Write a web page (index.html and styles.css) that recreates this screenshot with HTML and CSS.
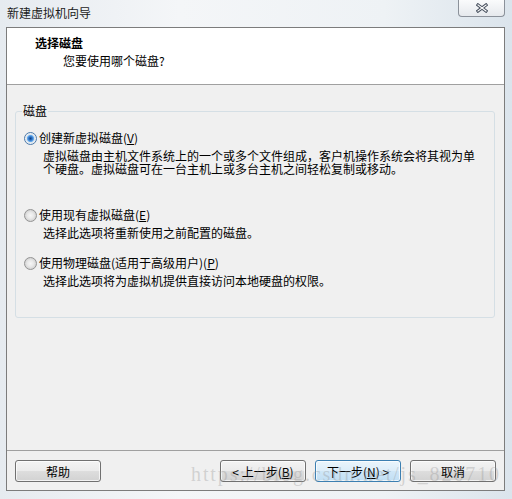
FILE: index.html
```html
<!DOCTYPE html>
<html lang="zh-CN">
<head>
<meta charset="utf-8">
<title>新建虚拟机向导</title>
<link rel="stylesheet" href="styles.css">
</head>
<body>
<div class="frame">
  <div class="titlebar">
    <span class="title">新建虚拟机向导</span>
    <button class="close" aria-label="关闭">
      <svg width="12" height="10" viewBox="0 0 12 10">
        <path d="M2 2 L10 8 M10 2 L2 8" stroke="#47505e" stroke-width="3.2" stroke-linecap="square" fill="none"/>
        <path d="M2 2 L10 8 M10 2 L2 8" stroke="#ffffff" stroke-width="1.2" stroke-linecap="square" fill="none"/>
      </svg>
    </button>
  </div>
  <div class="client">
    <div class="header">
      <div class="h-title">选择磁盘</div>
      <div class="h-sub">您要使用哪个磁盘?</div>
    </div>
    <div class="body">
      <fieldset class="group">
        <legend>磁盘</legend>
        <div class="option opt-1">
          <span class="radio checked"></span>
          <span class="label">创建新虚拟磁盘(<u>V</u>)</span>
          <p class="desc">虚拟磁盘由主机文件系统上的一个或多个文件组成，客户机操作系统会将其视为单<br>个硬盘。虚拟磁盘可在一台主机上或多台主机之间轻松复制或移动。</p>
        </div>
        <div class="option opt-2">
          <span class="radio"></span>
          <span class="label">使用现有虚拟磁盘(<u>E</u>)</span>
          <p class="desc">选择此选项将重新使用之前配置的磁盘。</p>
        </div>
        <div class="option">
          <span class="radio"></span>
          <span class="label">使用物理磁盘(适用于高级用户)(<u>P</u>)</span>
          <p class="desc">选择此选项将为虚拟机提供直接访问本地硬盘的权限。</p>
        </div>
      </fieldset>
      <div class="footer">
        <button class="btn">帮助</button>
        <div class="spacer"></div>
        <button class="btn">&lt; 上一步(<u>B</u>)</button>
        <button class="btn default">下一步(<u>N</u>) &gt;</button>
        <button class="btn">取消</button>
      </div>
    </div>
  </div>
  <div class="watermark">https://blog.csdn.net/js_826710</div>
</div>
</body>
</html>
```
FILE: styles.css
```css
html, body {
  margin: 0;
  padding: 0;
}
body {
  width: 512px;
  height: 499px;
  overflow: hidden;
  font-family: "Noto Sans CJK SC", "Liberation Sans", sans-serif;
  font-size: 12px;
  color: #000;
}
.frame {
  position: relative;
  height: 499px;
  display: flex;
  flex-direction: column;
  background: linear-gradient(to right, #e6ebf0 0%, #f4f6f8 35%, #eef2f5 75%, #dbe4ec 100%);
}
.titlebar {
  height: 27px;
  display: flex;
  align-items: flex-start;
  padding: 0 7px 0 7px;
  flex: none;
}
.title {
  line-height: 26px;
  color: #1b1b1b;
}
.close {
  margin-left: auto;
  width: 47px;
  height: 17px;
  padding: 0;
  border: 1px solid #8b919a;
  border-top: none;
  border-radius: 0 0 4px 4px;
  background: linear-gradient(#fafbfc, #e6e9ed);
  display: flex;
  align-items: center;
  justify-content: center;
}
.client {
  flex: none;
  margin: 0 7px 0 6px;
  height: 464px;
  box-sizing: border-box;
  border: 1px solid #7c7c7c;
  display: flex;
  flex-direction: column;
}
.header {
  flex: none;
  height: 57px;
  box-sizing: border-box;
  background: #fff;
  border-bottom: 1px solid #a0a0a0;
  padding: 7px 0 0 28px;
}
.h-title {
  font-weight: bold;
  line-height: 16px;
}
.h-sub {
  margin: 3px 0 0 28px;
  line-height: 14px;
}
.body {
  flex: 1;
  background: #f0f0f0;
  display: flex;
  flex-direction: column;
  padding-top: 19px;
}
.group {
  margin: 0 9px 0 8px;
  padding: 13px 0 30px 0;
  border: 1px solid #d5dfe5;
  border-radius: 3px;
  min-width: 0;
}
.group legend {
  margin-left: 6px;
  padding: 0 1px;
  line-height: 14px;
}
.option {
  display: grid;
  grid-template-columns: 13px auto;
  column-gap: 2px;
  align-items: center;
  padding-left: 8px;
}
.opt-1 { margin-bottom: 33px; }
.opt-2 { margin-bottom: 17px; }
.radio {
  width: 13px;
  height: 13px;
  box-sizing: border-box;
  border-radius: 50%;
  border: 1px solid #939393;
  background: radial-gradient(circle, #f6f6f6 0, #e9e9e9 3px, #d4d4d4 5.5px);
}
.radio.checked {
  border-color: #4b79aa;
  background: radial-gradient(circle, #0e3f86 0, #2f74c6 1.8px, #6fb1ef 3.3px, #d8e4ee 3.9px, #f3f3f3 5.5px);
}
.label {
  line-height: 14px;
  white-space: nowrap;
}
.desc {
  grid-column: 1 / -1;
  margin: 4px 0 0 19px;
  line-height: 13px;
  white-space: nowrap;
}
.footer {
  margin-top: auto;
  border-top: 1px solid #a0a0a0;
  padding: 9px 8px 8px 8px;
  display: flex;
  gap: 9px;
}
.spacer { flex: 1; }
.btn {
  width: 86px;
  height: 22px;
  padding: 0;
  border: 1px solid #707070;
  border-radius: 3px;
  font-family: inherit;
  font-size: 12px;
  color: #000;
  background: linear-gradient(#f3f3f3 0%, #ebebeb 48%, #dddddd 52%, #d2d2d2 100%);
  box-shadow: inset 0 0 0 1px rgba(255,255,255,0.7);
}
.btn.default {
  border-color: #3c7fb1;
  background: linear-gradient(#eaf5fc 0%, #dcedf9 48%, #cfe6f7 52%, #c1dff4 100%);
}
.watermark {
  position: absolute;
  left: 191px;
  top: 463px;
  font-family: "Liberation Serif", serif;
  font-size: 20px;
  letter-spacing: 1.9px;
  color: rgba(150, 150, 150, 0.35);
  white-space: nowrap;
  pointer-events: none;
}
```
